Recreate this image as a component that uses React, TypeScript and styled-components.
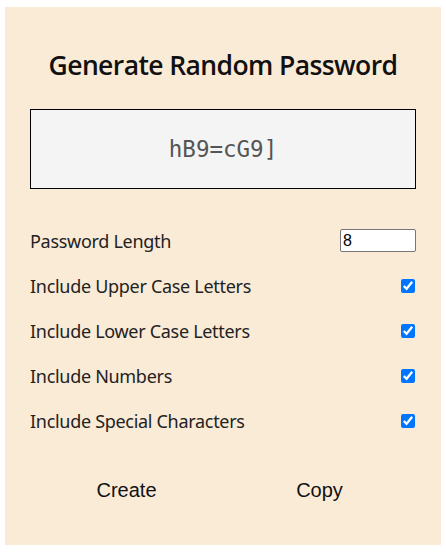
import React, { useState } from "react";
import styled, { createGlobalStyle } from "styled-components";

const Global = createGlobalStyle`
  html, body { margin: 0; padding: 0; background: #ffffff; }
  body { font-family: "Noto Sans", sans-serif; }
`;

const Page = styled.div`
  padding: 7px 5px;
`;

const Card = styled.div`
  width: 436px;
  box-sizing: border-box;
  background: #faebd7;
  padding: 38px 25px 35px;
  display: flex;
  flex-direction: column;
`;

const Title = styled.h1`
  margin: 0;
  height: 40px;
  line-height: 40px;
  text-align: center;
  font-family: "Open Sans", sans-serif;
  font-weight: 600;
  font-size: 26.5px;
  letter-spacing: -0.6px;
  color: #111;
`;

const Output = styled.div`
  margin-top: 24px;
  height: 80px;
  box-sizing: border-box;
  border: 1px solid #000;
  background: #f4f4f4;
  display: flex;
  align-items: center;
  justify-content: center;
  font-family: "DejaVu Sans Mono", monospace;
  font-size: 22.5px;
  color: #555;
`;

const Options = styled.div`
  margin-top: 29px;
  display: flex;
  flex-direction: column;
`;

const Row = styled.label`
  height: 45px;
  display: flex;
  align-items: center;
  justify-content: space-between;
  font-family: "Noto Sans", sans-serif;
  font-size: 18px;
  color: #222;
  letter-spacing: -0.3px;
`;

const NumberInput = styled.input`
  width: 76px;
  height: 23px;
  box-sizing: border-box;
  border: 1px solid #767676;
  border-radius: 2px;
  padding: 1px 2px;
  font-family: "Liberation Sans", Arial, sans-serif;
  font-size: 16px;
  color: #000;
  background: #fff;
  margin: 0;
`;

const Check = styled.input`
  width: 14px;
  height: 14px;
  margin: 0 1px 0 0;
  accent-color: #0075ff;
`;

const Buttons = styled.div`
  margin-top: 27px;
  display: grid;
  grid-template-columns: 1fr 1fr;
`;

const Button = styled.button`
  height: 40px;
  background: transparent;
  border: none;
  font-family: "Liberation Sans", Arial, sans-serif;
  font-size: 20px;
  color: #111;
  cursor: pointer;
`;

const options = [
  "Include Upper Case Letters",
  "Include Lower Case Letters",
  "Include Numbers",
  "Include Special Characters",
];

export default function App() {
  const [len, setLen] = useState("8");
  return (
    <Page>
      <Global />
      <Card>
        <Title>Generate Random Password</Title>
        <Output>hB9=cG9]</Output>
        <Options>
          <Row>
            Password Length
            <NumberInput type="number" value={len} onChange={(e) => setLen(e.target.value)} />
          </Row>
          {options.map((o) => (
            <Row key={o}>
              {o}
              <Check type="checkbox" defaultChecked />
            </Row>
          ))}
        </Options>
        <Buttons>
          <Button>Create</Button>
          <Button>Copy</Button>
        </Buttons>
      </Card>
    </Page>
  );
}
